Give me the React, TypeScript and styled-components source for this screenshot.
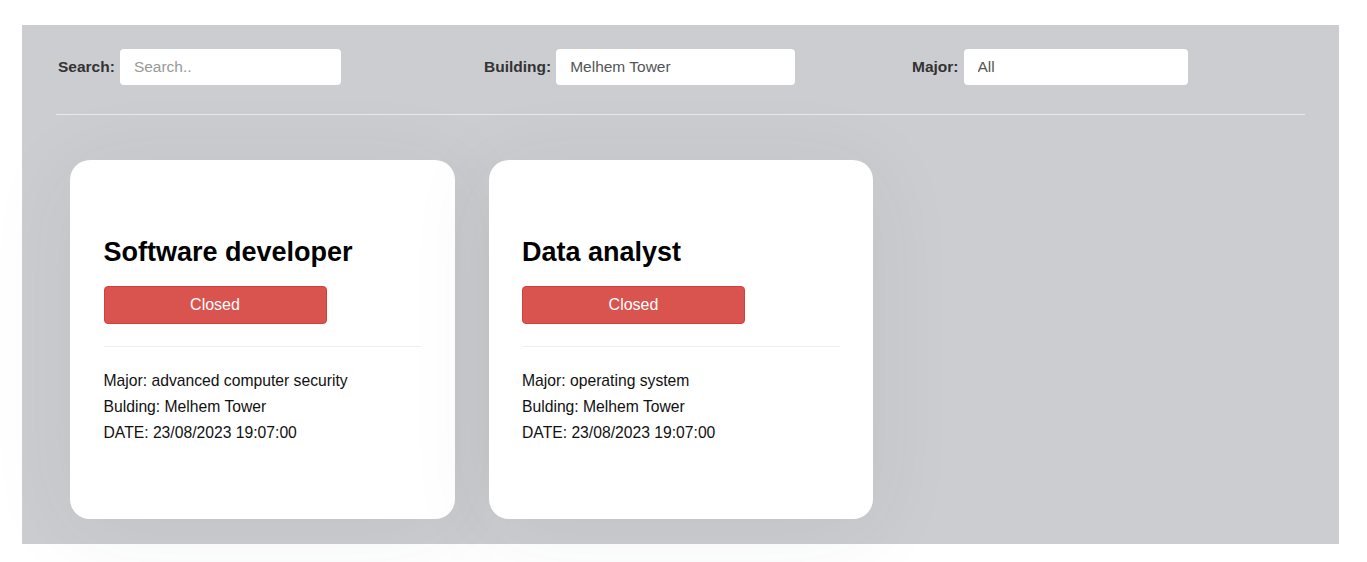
import React from "react";
import styled, { createGlobalStyle } from "styled-components";

const Global = createGlobalStyle`
  html, body { margin: 0; padding: 0; background: #ffffff; }
  body { font-family: "Liberation Sans", Arial, sans-serif; overflow: hidden; }
  * { box-sizing: border-box; }
`;

const Page = styled.div`
  padding: 25px 28px 18px 22px;
`;

const Panel = styled.section`
  background: #cccdd1;
  padding: 24px 34px 25px 34px;
`;

const FilterBar = styled.div`
  display: grid;
  grid-template-columns: 426px 428px auto;
  padding-left: 2px;
`;

const Field = styled.div`
  display: flex;
  align-items: center;
  gap: 5px;
`;

const Label = styled.label`
  font-weight: bold;
  font-size: 15.5px;
  color: #333;
`;

const Input = styled.input<{ $w: number }>`
  width: ${(p) => p.$w}px;
  height: 36px;
  border: none;
  border-radius: 4px;
  background: #fff;
  padding: 0 14px;
  font-family: "Liberation Sans", Arial, sans-serif;
  font-size: 15.5px;
  color: #555;
  outline: none;
  &::placeholder { color: #999; }
`;

const Divider = styled.hr`
  border: none;
  border-top: 1px solid #e9e9ea;
  margin: 29px 0 45px 0;
`;

const CardGrid = styled.div`
  display: flex;
  gap: 34px;
  padding-left: 14px;
`;

const Card = styled.article`
  width: 384.5px;
  height: 359px;
  background: #fff;
  border-radius: 20px;
  padding: 77px 33.5px 0 33.5px;
  box-shadow: 0 10px 90px rgba(40, 50, 60, 0.07);
`;

const Title = styled.h2`
  margin: 0 0 18px 0;
  font-size: 27px;
  line-height: 31px;
  font-weight: bold;
  color: #000;
`;

const StatusButton = styled.button`
  width: 223px;
  height: 38px;
  background: #d9534f;
  border: 1px solid #d43f3a;
  border-radius: 4px;
  color: #fff;
  font-family: "Liberation Sans", Arial, sans-serif;
  font-size: 16px;
  display: block;
`;

const CardRule = styled.hr`
  border: none;
  border-top: 1px solid #eeeeee;
  margin: 22px 0 21px 0;
`;

const Info = styled.p`
  margin: 0;
  font-size: 15.7px;
  line-height: 26px;
  color: #111;
`;

const jobs = [
  { title: "Software developer", major: "advanced computer security" },
  { title: "Data analyst", major: "operating system" },
];

export default function App() {
  return (
    <Page>
      <Global />
      <Panel>
        <FilterBar>
          <Field>
            <Label>Search:</Label>
            <Input $w={221} placeholder="Search.." />
          </Field>
          <Field>
            <Label>Building:</Label>
            <Input $w={239} defaultValue="Melhem Tower" />
          </Field>
          <Field>
            <Label>Major:</Label>
            <Input $w={224} defaultValue="All" />
          </Field>
        </FilterBar>
        <Divider />
        <CardGrid>
          {jobs.map((j) => (
            <Card key={j.title}>
              <Title>{j.title}</Title>
              <StatusButton>Closed</StatusButton>
              <CardRule />
              <Info>Major: {j.major}</Info>
              <Info>Bulding: Melhem Tower</Info>
              <Info>DATE: 23/08/2023 19:07:00</Info>
            </Card>
          ))}
        </CardGrid>
      </Panel>
    </Page>
  );
}
